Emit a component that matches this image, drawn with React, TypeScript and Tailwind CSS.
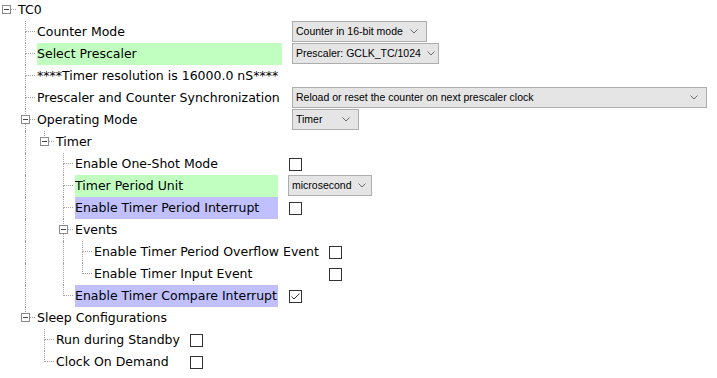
import React from 'react';

type Control =
  | { kind: 'select'; value: string; width: string }
  | { kind: 'check'; checked?: boolean };

type TreeNode = {
  label: string;
  hl?: 'green' | 'purple';
  control?: Control;
  childLabelW?: string;
  children?: TreeNode[];
};

const tree: TreeNode = {
  label: 'TC0',
  childLabelW: 'w-[245px]',
  children: [
    { label: 'Counter Mode', control: { kind: 'select', value: 'Counter in 16-bit mode', width: 'w-[135px]' } },
    { label: 'Select Prescaler', hl: 'green', control: { kind: 'select', value: 'Prescaler: GCLK_TC/1024', width: 'w-[147px]' } },
    { label: '****Timer resolution is 16000.0 nS****' },
    {
      label: 'Prescaler and Counter Synchronization',
      control: { kind: 'select', value: 'Reload or reset the counter on next prescaler clock', width: 'w-[415px]' },
    },
    {
      label: 'Operating Mode',
      control: { kind: 'select', value: 'Timer', width: 'w-[67px]' },
      children: [
        {
          label: 'Timer',
          childLabelW: 'w-[203px]',
          children: [
            { label: 'Enable One-Shot Mode', control: { kind: 'check' } },
            { label: 'Timer Period Unit', hl: 'green', control: { kind: 'select', value: 'microsecond', width: 'w-[84px]' } },
            { label: 'Enable Timer Period Interrupt', hl: 'purple', control: { kind: 'check' } },
            {
              label: 'Events',
              childLabelW: 'w-[224px]',
              children: [
                { label: 'Enable Timer Period Overflow Event', control: { kind: 'check' } },
                { label: 'Enable Timer Input Event', control: { kind: 'check' } },
              ],
            },
            { label: 'Enable Timer Compare Interrupt', hl: 'purple', control: { kind: 'check', checked: true } },
          ],
        },
      ],
    },
    {
      label: 'Sleep Configurations',
      childLabelW: 'w-[123px]',
      children: [
        { label: 'Run during Standby', control: { kind: 'check' } },
        { label: 'Clock On Demand', control: { kind: 'check' } },
      ],
    },
  ],
};

const dots = 'border-dotted border-[#a0a0a0]';

const Select: React.FC<{ value: string; width: string }> = ({ value, width }) => (
  <div
    className={`${width} ml-[10px] h-[21px] self-start flex items-center justify-between pl-[3px] pr-[8px] bg-[#e5e5e5] border border-[#adadad] text-[10.5px] text-black font-['Liberation_Sans',Arial,sans-serif] whitespace-nowrap`}
  >
    <span>{value}</span>
    <svg width="8" height="5" viewBox="0 0 8 5" className="shrink-0 ml-[6px]">
      <path d="M0.5 0.5 L4 4 L7.5 0.5" fill="none" stroke="#6b6b6b" strokeWidth="1" />
    </svg>
  </div>
);

const Check: React.FC<{ checked?: boolean }> = ({ checked }) => (
  <div className="ml-[11px] w-[13px] h-[13px] border border-[#333] bg-white flex items-center justify-center">
    {checked && (
      <svg width="11" height="11" viewBox="0 0 11 11">
        <path d="M1.5 5.5 L4 8 L9.5 2.5" fill="none" stroke="#333" strokeWidth="1" />
      </svg>
    )}
  </div>
);

const Connector: React.FC<{ up: boolean; down: boolean; box: boolean }> = ({ up, down, box }) => (
  <div className="relative w-[19px] h-[22px] shrink-0">
    <div className={`ml-[9px] w-[10px] h-[11px] border-b ${up ? 'border-l' : ''} ${dots}`} />
    <div className={`ml-[9px] h-[11px] ${down ? `border-l ${dots}` : ''}`} />
    {box && (
      <div className="absolute left-[5px] top-[6px] w-[9px] h-[9px] border border-[#8a8a8a] bg-white flex items-center justify-center">
        <div className="w-[5px] h-px bg-[#444]" />
      </div>
    )}
  </div>
);

type Row = { node: TreeNode; level: number; guides: boolean[]; hasNext: boolean; labelW?: string };

function flatten(node: TreeNode, level: number, guides: boolean[], hasNext: boolean, labelW: string | undefined, out: Row[]) {
  out.push({ node, level, guides, hasNext, labelW });
  const kids = node.children ?? [];
  kids.forEach((c, i) => {
    flatten(c, level + 1, level === 0 ? [false] : [...guides, hasNext], i < kids.length - 1, node.childLabelW, out);
  });
}

const TreeRow: React.FC<{ row: Row }> = ({ row }) => {
  const { node, level, guides, hasNext, labelW } = row;
  const bg = node.hl === 'green' ? 'bg-[#c0ffc0]' : node.hl === 'purple' ? 'bg-[#c0c0ff]' : '';
  return (
    <div className="flex items-center h-[22px]">
      {guides.map((g, i) => (
        <div key={i} className="w-[19px] h-[22px] shrink-0">
          {g && <div className={`ml-[9px] h-full border-l ${dots}`} />}
        </div>
      ))}
      <Connector up={level > 0} down={hasNext} box={!!node.children} />
      <div className={`ml-[2px] h-[22px] flex items-center whitespace-nowrap ${node.control ? labelW ?? '' : ''} ${bg}`}>
        {node.label}
      </div>
      {node.control?.kind === 'select' && <Select value={node.control.value} width={node.control.width} />}
      {node.control?.kind === 'check' && <Check checked={node.control.checked} />}
    </div>
  );
};

export default function App() {
  const rows: Row[] = [];
  flatten(tree, 0, [], false, undefined, rows);
  return (
    <div className="w-[717px] h-[378px] overflow-hidden bg-white text-black font-['DejaVu_Sans',Verdana,sans-serif] text-[12.5px]">
      <div className="mt-[-1px] ml-[-3px]">
        {rows.map((r, i) => (
          <TreeRow key={i} row={r} />
        ))}
      </div>
    </div>
  );
}
